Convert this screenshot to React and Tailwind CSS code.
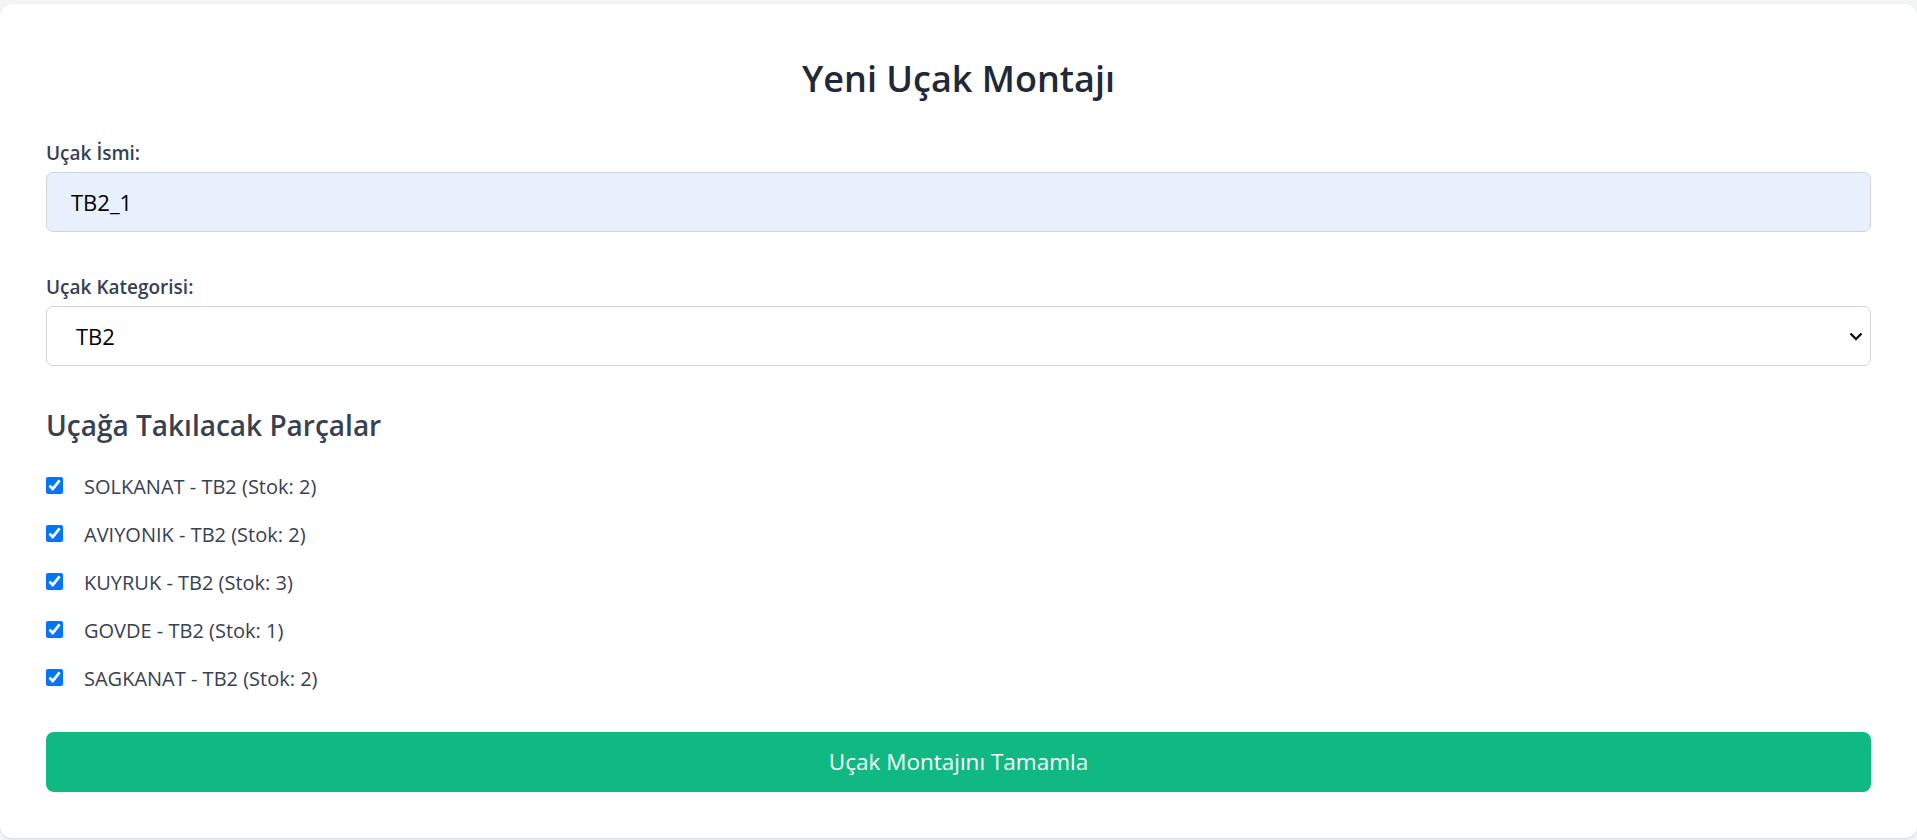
import { useState } from "react";

const parts = [
  { id: 1, name: "SOLKANAT", type: "TB2", stock: 2 },
  { id: 2, name: "AVIYONIK", type: "TB2", stock: 2 },
  { id: 3, name: "KUYRUK", type: "TB2", stock: 3 },
  { id: 4, name: "GOVDE", type: "TB2", stock: 1 },
  { id: 5, name: "SAGKANAT", type: "TB2", stock: 2 },
];

export default function App() {
  const [name, setName] = useState("TB2_1");
  const [category, setCategory] = useState("TB2");
  const [selected, setSelected] = useState(parts.map((p) => p.id));

  const toggle = (id) => {
    setSelected((prev) =>
      prev.includes(id) ? prev.filter((x) => x !== id) : [...prev, id]
    );
  };

  return (
    <div
      className="min-h-screen bg-[#f3f4f6] pt-[4px]"
      style={{ fontFamily: '"Open Sans", "Noto Sans", sans-serif' }}
    >
      <div className="bg-white rounded-[12px] shadow-sm px-[46px] pt-[52px] pb-[46px]">
        <h2 className="text-center text-[36px] leading-[45px] font-semibold text-[#1f2937] mb-[37px]">
          Yeni Uçak Montajı
        </h2>

        {/* uçak ismi */}
        <label className="block text-[19px] leading-[30px] font-semibold text-[#374151] mb-[4px]">
          Uçak İsmi:
        </label>
        <input
          type="text"
          value={name}
          onChange={(e) => setName(e.target.value)}
          className="block w-full h-[60px] px-[24px] text-[22px] text-black bg-[#e8f0fe] border border-[#d1d5db] rounded-[7px] outline-none mb-[40px]"
        />

        {/* kategori */}
        <label className="block text-[19px] leading-[30px] font-semibold text-[#374151] mb-[4px]">
          Uçak Kategorisi:
        </label>
        <div className="relative mb-[41px]">
          <select
            value={category}
            onChange={(e) => setCategory(e.target.value)}
            className="block w-full h-[60px] pl-[29px] pr-[40px] text-[22px] text-black bg-white border border-[#d1d5db] rounded-[7px] outline-none appearance-none"
          >
            <option value="TB2">TB2</option>
            <option value="TB3">TB3</option>
            <option value="AKINCI">AKINCI</option>
            <option value="KIZILELMA">KIZILELMA</option>
          </select>
          <svg
            className="absolute right-[8px] top-1/2 -translate-y-1/2 pointer-events-none"
            width="14"
            height="10"
            viewBox="0 0 14 10"
            fill="none"
          >
            <path d="M1.5 2.5 L7 8 L12.5 2.5" stroke="#111" strokeWidth="2.4" />
          </svg>
        </div>

        <h3 className="text-[28px] leading-[36px] font-semibold text-[#374151] mb-[29px]">
          Uçağa Takılacak Parçalar
        </h3>

        <div className="flex flex-col gap-[18px] mb-[38px]">
          {parts.map((part) => (
            <label key={part.id} className="flex items-center h-[30px] cursor-pointer">
              <input
                type="checkbox"
                checked={selected.includes(part.id)}
                onChange={() => toggle(part.id)}
                className="w-[17px] h-[17px] mr-[21px] accent-[#0075ff] -mt-[3px]"
              />
              <span className="text-[20px] text-[#374151]">
                {part.name} - {part.type} (Stok: {part.stock})
              </span>
            </label>
          ))}
        </div>

        <button className="w-full h-[60px] bg-[#10b981] text-white text-[22.5px] rounded-[8px]">
          Uçak Montajını Tamamla
        </button>
      </div>
    </div>
  );
}
